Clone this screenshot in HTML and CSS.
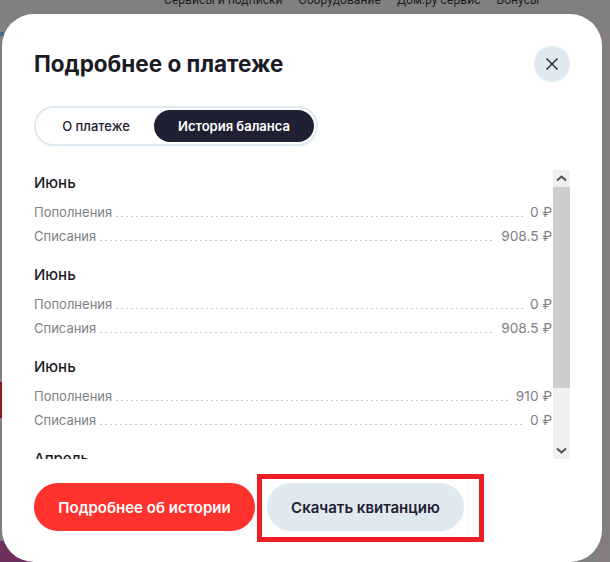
FILE: index.html
```html
<!DOCTYPE html>
<html lang="ru">
<head>
<meta charset="utf-8">
<title>Подробнее о платеже</title>
<link rel="stylesheet" href="styles.css">
</head>
<body>
<nav class="topnav">
  <span>Сервисы и подписки</span>
  <span>Оборудование</span>
  <span>Дом.ру сервис</span>
  <span>Бонусы</span>
</nav>
<div class="stub-blue"></div>
<div class="stub-right"></div>
<div class="stub-red"></div>
<div class="stub-purple"></div>
<section class="modal">
  <header class="modal-head">
    <h1 class="modal-title">Подробнее о платеже</h1>
    <button class="close" aria-label="Закрыть">
      <svg width="14" height="14" viewBox="0 0 14 14"><path d="M1.5 1.5l11 11M12.500 1.500l-11 11" fill="none" stroke="#1f2033" stroke-width="1.4"/></svg>
    </button>
  </header>
  <div class="tabs">
    <span class="tab">О платеже</span>
    <span class="tab tab-active">История баланса</span>
  </div>
  <div class="scroll-area">
    <div class="list">
      <div class="group">
        <h2 class="month">Июнь</h2>
        <div class="row"><span>Пополнения</span><i class="dots"></i><span class="amount">0 ₽</span></div>
        <div class="row"><span>Списания</span><i class="dots"></i><span class="amount">908.5 ₽</span></div>
      </div>
      <div class="group">
        <h2 class="month">Июнь</h2>
        <div class="row"><span>Пополнения</span><i class="dots"></i><span class="amount">0 ₽</span></div>
        <div class="row"><span>Списания</span><i class="dots"></i><span class="amount">908.5 ₽</span></div>
      </div>
      <div class="group">
        <h2 class="month">Июнь</h2>
        <div class="row"><span>Пополнения</span><i class="dots"></i><span class="amount">910 ₽</span></div>
        <div class="row"><span>Списания</span><i class="dots"></i><span class="amount">0 ₽</span></div>
      </div>
      <div class="group">
        <h2 class="month">Апрель</h2>
      </div>
    </div>
    <div class="scrollbar">
      <div class="sb-btn"><svg width="11" height="7" viewBox="0 0 11 7"><path d="M1 5.500l4.500-4 4.500 4" fill="none" stroke="#505050" stroke-width="2"/></svg></div>
      <div class="sb-thumb"></div>
      <div class="sb-track"></div>
      <div class="sb-btn"><svg width="11" height="7" viewBox="0 0 11 7"><path d="M1 1.500l4.500 4 4.500-4" fill="none" stroke="#505050" stroke-width="2"/></svg></div>
    </div>
  </div>
  <footer class="actions">
    <button class="btn btn-red">Подробнее об истории</button>
    <button class="btn btn-light">Скачать квитанцию</button>
  </footer>
</section>
<div class="annotation"></div>
</body>
</html>
```
FILE: styles.css
```css
* { box-sizing: border-box; }
html, body { margin: 0; height: 100%; }
body {
  background: #808080;
  overflow: hidden;
  font-family: Inter, "Noto Sans", sans-serif;
  color: #1f2033;
}
.topnav {
  display: flex;
  gap: 16px;
  height: 14px;
  padding-left: 164px;
  margin-top: -7px;
  font-family: Roboto, sans-serif;
  font-size: 12px;
  letter-spacing: 0.07px;
  line-height: 14px;
  color: #1c1c1c;
}
.stub-blue {
  position: absolute; left: 0; top: 32px;
  width: 4px; height: 4px;
  background: #4a6a8c;
}
.stub-right {
  position: absolute; right: 0; top: 31px;
  width: 10px; height: 531px;
  background: #837e7d;
}
.stub-red {
  position: absolute; left: 0; top: 382px;
  width: 4px; height: 36px;
  background: #8b1a1e;
}
.stub-purple {
  position: absolute; left: 0; top: 541px;
  width: 40px; height: 21px;
  background: #70305e;
}
.modal {
  position: absolute;
  left: 2px; top: 14px;
  width: 600px; height: 548px;
  background: #fff;
  border-radius: 32px;
  padding: 32px 32px 0;
}
.modal-head {
  display: flex;
  justify-content: space-between;
  align-items: center;
  height: 36px;
}
.modal-title {
  margin: 0;
  font-size: 22.5px;
  line-height: 36px;
  font-weight: 700;
  color: #1a1b26;
}
.close {
  width: 36px; height: 36px;
  padding: 0; border: 0;
  border-radius: 50%;
  background: #dfeaf0;
  display: flex; align-items: center; justify-content: center;
}
.tabs {
  display: inline-flex;
  margin-top: 24px;
  height: 40px;
  padding: 2px;
  border: 2px solid #dfeaf0;
  border-radius: 20px;
  font-size: 13px;
  font-weight: 500;
}
.tab {
  width: 116px;
  height: 32px;
  line-height: 32px;
  text-align: center;
}
.tab-active {
  width: 160px;
  border-radius: 16px;
  background: #1f2033;
  color: #fff;
  font-weight: 600;
}
.scroll-area {
  display: flex;
  margin-top: 24px;
  height: 289px;
}
.list {
  width: 519px;
  overflow: hidden;
}
.group { margin-bottom: 14px; padding-top: 1px; }
.month {
  margin: 0 0 5px;
  font-size: 15px;
  line-height: 24px;
  font-weight: 500;
  color: #1a1b26;
}
.row {
  display: flex;
  align-items: baseline;
  height: 24px;
  line-height: 24px;
  font-size: 13px;
  color: #7f8087;
}
.amount { font-size: 13.7px; padding-right: 1px; }
.dots {
  flex: 1;
  margin: 0 7px 0 4px;
  height: 1px;
  background: repeating-linear-gradient(90deg, #c8c8c8 0 2px, transparent 2px 5px);
}
.scrollbar {
  width: 17px;
  display: flex;
  flex-direction: column;
  background: #f0f0f0;
}
.sb-btn {
  height: 17px;
  flex: none;
  display: flex; align-items: center; justify-content: center;
}
.sb-thumb { height: 201px; background: #cdcdcd; flex: none; }
.sb-track { flex: 1; }
.actions {
  display: flex;
  gap: 12px;
  margin-top: 24px;
}
.btn {
  height: 48px;
  border: 0;
  border-radius: 24px;
  font-family: inherit;
  font-size: 15px;
  font-weight: 600;
  padding: 0 24px;
}
.btn-red { width: 221px; background: #ff322e; color: #fff; }
.btn-light { width: 197px; background: #dfeaf0; color: #1f2033; }
.annotation {
  position: absolute;
  left: 257px; top: 474px;
  width: 227px; height: 68px;
  border: 5px solid #ee1c25;
}
```
